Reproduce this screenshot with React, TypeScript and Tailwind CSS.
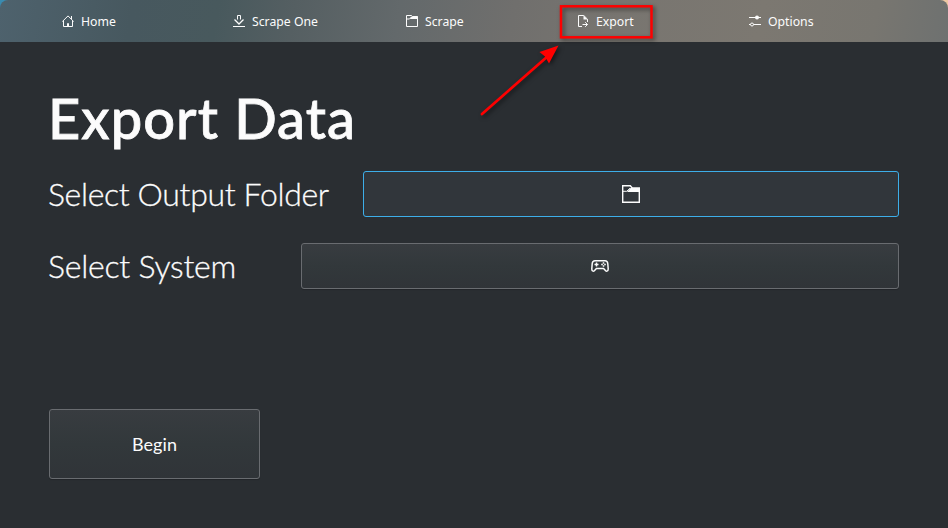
import type { ReactNode } from 'react';

const svgProps = { fill: 'none', stroke: '#fcfcfc', shapeRendering: 'auto' as const };

function HomeIcon() {
  return (
    <svg width="12" height="12" viewBox="0 0 12 12" {...svgProps}>
      <path d="M0.3 6.6 6 .9l5.7 5.7M1.5 5.5v6h9v-6M9.5 1v3M5.5 11.5v-3h1v3" />
    </svg>
  );
}
function DownloadIcon() {
  return (
    <svg width="12" height="12" viewBox="0 0 12 12" {...svgProps}>
      <path d="M0 11.5h12M4.5 4.5v-4h3v4" />
      <path d="M1.5 4.5 6 9l4.5-4.5" strokeWidth="1.3" />
    </svg>
  );
}
function FolderIcon() {
  return (
    <svg width="12" height="12" viewBox="0 0 12 12" {...svgProps}>
      <path d="M0.5 0.5h5l1 1h5v10h-11zM0.5 4h3l2-2" />
      <path d="M5.5 1.5h6.5V4H3.8z" fill="#fcfcfc" stroke="none" />
    </svg>
  );
}
function LargeFolderIcon() {
  return (
    <svg width="18" height="18" viewBox="0 0 18 18" {...svgProps}>
      <path d="M.7 17.3V.7h7.6l2 2.3h7v14.3z" strokeWidth="1.4" />
      <path d="M.7 6.3h4L8 3.2" />
      <path d="M8.5 3H18v4H5z" fill="#fcfcfc" stroke="none" />
    </svg>
  );
}
function ExportIcon() {
  return (
    <svg width="12" height="12" viewBox="0 0 12 12" {...svgProps}>
      <path d="M5 11.5H1.5V.5h5.3l3.7 3.7V7M5.5 9.5h5M8.2 7.2l2.3 2.3-2.3 2.3" />
      <path d="M6.5 0.5v4h4z" fill="#fcfcfc" stroke="none" />
    </svg>
  );
}
function OptionsIcon() {
  return (
    <svg width="12" height="12" viewBox="0 0 12 12" {...svgProps}>
      <path d="M0 2.5h12M0 9.5h1.5M4.5 9.5H12" />
      <circle cx="8" cy="2.5" r="2" fill="#fcfcfc" stroke="none" />
      <circle cx="3" cy="9.5" r="1.5" />
    </svg>
  );
}
function GamepadIcon() {
  return (
    <svg width="18" height="12" viewBox="0 0 18 12" {...svgProps} strokeWidth="1.5">
      <path d="M4 .8h10c2 0 2.6 1 2.8 3l.4 5c.1 2.8-2.1 3-3.3 1.1L12.6 8.5H5.4L4.1 9.9C2.9 11.8.7 11.6.8 8.8l.4-5C1.4 1.8 2 .8 4 .8Z" />
      <path d="M5.5 2.5v4M3.5 4.5h4M12.5 2.2v1.6M12.5 5.2v1.6M10.2 4.5h1.6M13.2 4.5h1.6" />
    </svg>
  );
}

function NavItem({ icon, label }: { icon: ReactNode; label: string }) {
  return (
    <a className="flex h-[42px] items-center gap-2 whitespace-nowrap">
      {icon}
      <span className="-ml-px pt-[3px]">{label}</span>
    </a>
  );
}

const buttonFace =
  'flex items-center justify-center rounded-[3px] border border-[#696c70] bg-linear-to-b from-[#383c40] via-[#32383b] to-[#303438] shadow-[0_1px_1px_rgba(0,0,0,0.2)]';

const label = 'whitespace-nowrap text-[32px] leading-[44px] pb-px -ml-px font-light [-webkit-text-stroke:0.3px_#fcfcfc]';

export default function App() {
  return (
    <div className="relative h-[528px] w-[948px] overflow-hidden bg-[#2a2e32] text-[#fcfcfc]">
      <header className="bg-linear-to-r from-[#398bb0] to-[#edc7a2]">
        <nav className="grid h-[42px] grid-cols-[171px_173px_171px_172px_1fr] rounded-t-[8px] bg-[linear-gradient(100deg,#4e626d_0%,#47585f_14%,#48595d_23%,#555f62_31%,#63696b_42%,#706f6d_54%,#787570_65%,#7c7871_80%,#787670_92%,#6e7170_100%)] pl-[62px] font-['Noto_Sans',sans-serif] text-[12.25px]">
          <NavItem icon={<HomeIcon />} label="Home" />
          <NavItem icon={<DownloadIcon />} label="Scrape One" />
          <NavItem icon={<FolderIcon />} label="Scrape" />
          <NavItem icon={<ExportIcon />} label="Export" />
          <NavItem icon={<OptionsIcon />} label="Options" />
        </nav>
      </header>
      <main className="flex flex-col items-start pr-[49px] pl-[49px] font-[Lato,sans-serif]">
        <h1 className="mt-[41px] -ml-px h-[72px] whitespace-nowrap text-[56px] leading-[70px] font-medium tracking-[1.05px] [-webkit-text-stroke:0.8px_#fcfcfc]">Export Data</h1>
        <div className="mt-4 flex h-[46px] w-full items-center">
          <span className={`${label} w-[315px] tracking-[-0.36px]`}>Select Output Folder</span>
          <button className="flex h-[46px] flex-1 items-center justify-center rounded-[3px] border border-[#3daee9] bg-[#31363b]">
            <LargeFolderIcon />
          </button>
        </div>
        <div className="mt-[26px] flex h-[46px] w-full items-center">
          <span className={`${label} w-[253px] tracking-[-0.24px]`}>Select System</span>
          <button className={`${buttonFace} h-[46px] flex-1`}>
            <GamepadIcon />
          </button>
        </div>
        <button className={`${buttonFace} mt-[120px] h-[70px] w-[211px] text-[18px] tracking-[0.1px]`}>Begin</button>
      </main>
      <svg className="absolute top-0 left-[475px] drop-shadow-[2px_2px_2px_rgba(0,0,0,0.5)]" width="190" height="125" viewBox="475 0 190 125">
        <rect x="561" y="6.3" width="90.5" height="31" fill="none" stroke="#fe0000" strokeWidth="2.5" />
        <path d="M482 114 548 56" stroke="#fe0000" strokeWidth="2.7" strokeLinecap="round" />
        <path d="m558.5 45.5-19 6.5 5.5 4.5 4 7Z" fill="#fe0000" />
      </svg>
    </div>
  );
}
